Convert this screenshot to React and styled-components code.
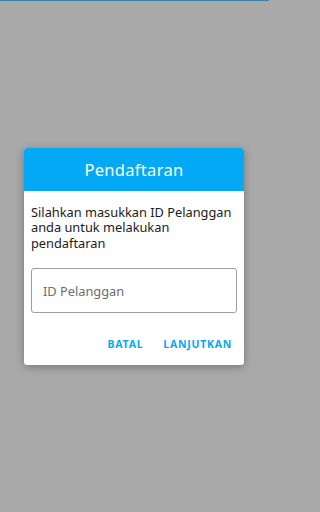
import React from 'react';
import styled, { createGlobalStyle } from 'styled-components';

const Global = createGlobalStyle`
  html, body {
    margin: 0;
    padding: 0;
    background: #a9a9a9;
  }
  body {
    font-family: "Noto Sans", "Open Sans", sans-serif;
  }
`;

const Screen = styled.div`
  width: 269px;
  height: 512px;
  box-sizing: border-box;
  background: #a9a9a9;
  border-top: 1px solid #3b7fa3;
  display: flex;
  align-items: center;
  justify-content: center;
`;

const Dialog = styled.div`
  width: 220px;
  background: #ffffff;
  border-radius: 3px;
  overflow: hidden;
  box-shadow: 0 2px 8px rgba(0, 0, 0, 0.3);
  margin-left: -1px;
`;

const Header = styled.div`
  height: 43px;
  background: #03a9f4;
  color: #ffffff;
  font-size: 16.5px;
  display: flex;
  align-items: center;
  justify-content: center;
  letter-spacing: 0.3px;
`;

const Body = styled.div`
  padding: 14px 7px 0 7px;
`;

const Message = styled.p`
  margin: 0;
  font-size: 12.8px;
  line-height: 15.5px;
  color: #1a1a1a;
`;

const Field = styled.input`
  display: block;
  box-sizing: border-box;
  width: 100%;
  height: 45px;
  margin-top: 17px;
  border: 1px solid #9e9e9e;
  border-radius: 3px;
  padding: 0 11px;
  font-family: inherit;
  font-size: 12.8px;
  color: #333;
  outline: none;

  &::placeholder {
    color: #6d6d6d;
  }
`;

const Actions = styled.div`
  display: flex;
  justify-content: flex-end;
  gap: 20px;
  padding: 24px 12px 14px 0;
`;

const Action = styled.button`
  border: none;
  background: none;
  padding: 0;
  font-family: inherit;
  font-size: 10.5px;
  font-weight: 700;
  letter-spacing: 0.75px;
  color: #03a9f4;
  line-height: 14px;
`;

export default function App() {
  return (
    <>
      <Global />
      <Screen>
        <Dialog>
          <Header>Pendaftaran</Header>
          <Body>
            <Message>
              Silahkan masukkan ID Pelanggan anda untuk melakukan pendaftaran
            </Message>
            <Field placeholder="ID Pelanggan" />
          </Body>
          <Actions>
            <Action>BATAL</Action>
            <Action>LANJUTKAN</Action>
          </Actions>
        </Dialog>
      </Screen>
    </>
  );
}
